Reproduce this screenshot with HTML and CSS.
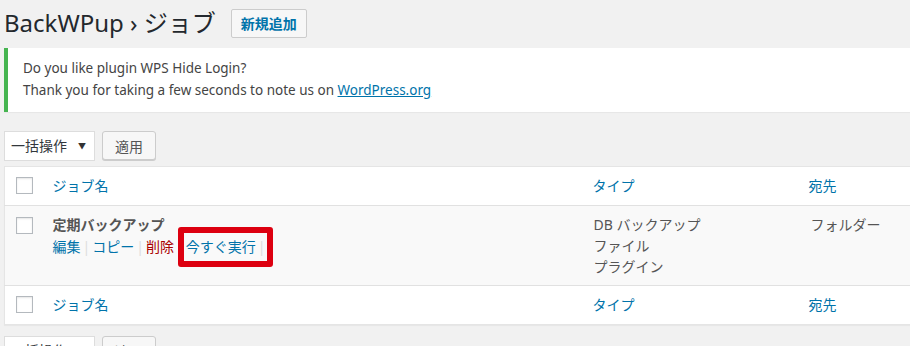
FILE: index.html
```html
<!DOCTYPE html>
<html lang="ja">
<head>
    <meta charset="UTF-8">
    <meta name="viewport" content="width=device-width, initial-scale=1.0">
    <title>BackWPup ジョブ</title>
    <link rel="stylesheet" href="styles.css">
</head>
<body>
    <div class="wrap">
        <div class="title-row">
            <h1>BackWPup › ジョブ</h1>
            <a href="#" class="title-action">新規追加</a>
        </div>

        <div class="notice">
            <p>Do you like plugin WPS Hide Login?</p>
            <p>Thank you for taking a few seconds to note us on <a href="#">WordPress.org</a></p>
        </div>

        <div class="tablenav">
            <div class="bulk-select">一括操作 <span class="arrow">▼</span></div>
            <button class="button">適用</button>
        </div>

        <table class="jobs">
            <thead>
                <tr>
                    <td class="check"><input type="checkbox"></td>
                    <th class="col-name"><a href="#">ジョブ名</a></th>
                    <th class="col-type"><a href="#">タイプ</a></th>
                    <th class="col-dest"><a href="#">宛先</a></th>
                </tr>
            </thead>
            <tbody>
                <tr>
                    <td class="check"><input type="checkbox"></td>
                    <td class="col-name">
                        <strong class="job-title">定期バックアップ</strong>
                        <div class="row-actions">
                            <a href="#">編集</a><span class="sep">|</span><a href="#">コピー</a><span class="sep">|</span><a href="#" class="delete">削除</a><span class="sep">|</span><span class="highlight"><a href="#">今すぐ実行</a><span class="sep">|</span><span class="mark"></span></span>
                        </div>
                    </td>
                    <td class="col-type">DB バックアップ<br>ファイル<br>プラグイン</td>
                    <td class="col-dest">フォルダー</td>
                </tr>
            </tbody>
            <tfoot>
                <tr>
                    <td class="check"><input type="checkbox"></td>
                    <th class="col-name"><a href="#">ジョブ名</a></th>
                    <th class="col-type"><a href="#">タイプ</a></th>
                    <th class="col-dest"><a href="#">宛先</a></th>
                </tr>
            </tfoot>
        </table>

        <div class="tablenav tablenav-bottom">
            <div class="bulk-select">一括操作 <span class="arrow">▼</span></div>
            <button class="button">適用</button>
        </div>
    </div>
</body>
</html>
```

FILE: styles.css
```css
html, body { margin: 0; padding: 0; background: #f1f1f1; overflow: hidden; }
body { font-family: "Noto Sans", "Noto Sans CJK JP", sans-serif; color: #444; font-size: 14px; }
a { color: #0073aa; text-decoration: none; }

.wrap { width: 940px; padding-left: 4px; }

.title-row { display: flex; align-items: center; height: 46px; }
h1 { margin: 0; font-size: 24px; font-weight: 400; color: #23282d; line-height: 29px; padding-bottom: 2px; }
.title-action { margin-left: 15px; padding: 0 9px; height: 27px; line-height: 27px; border: 1px solid #ccc; border-radius: 2px; background: #f7f7f7; font-size: 14px; font-weight: 700; color: #0073aa; }

.notice { margin-top: 2px; background: #fff; border-left: 4px solid #46b450; box-shadow: 0 1px 1px rgba(0, 0, 0, 0.04); padding: 9px 15px 11px; }
.notice p { margin: 0; line-height: 22px; font-size: 13.5px; }
.notice a { text-decoration: underline; }

.tablenav { display: flex; gap: 7px; margin-top: 19px; height: 30px; }
.tablenav-bottom { margin-top: 11px; }
.bulk-select { width: 83px; height: 28px; line-height: 28px; padding-left: 6px; background: #fff; border: 1px solid #ddd; color: #32373c; font-size: 14px; display: flex; justify-content: space-between; }
.bulk-select .arrow { font-size: 8px; color: #333; padding-right: 8px; }
.button { height: 29px; padding: 0 12px; font-family: inherit; font-size: 14px; color: #555; background: #f7f7f7; border: 1px solid #ccc; border-radius: 3px; box-shadow: 0 1px 0 #ccc; }

.jobs { width: 930px; margin-top: 5px; border-collapse: collapse; background: #fff; border: 1px solid #e5e5e5; box-shadow: 0 1px 1px rgba(0, 0, 0, 0.04); }
.jobs th, .jobs td { text-align: left; vertical-align: top; font-weight: 400; }
.jobs thead th, .jobs tfoot th { padding: 9px 10px 10px; line-height: 19px; font-size: 14px; }
.jobs thead tr { border-bottom: 1px solid #e1e1e1; }
.jobs tfoot tr { border-top: 1px solid #e1e1e1; }
.jobs .check { width: 38px; padding: 10px 0 0 11px; box-sizing: border-box; }
.jobs tbody .check { padding-top: 11px; }
.jobs .col-name { width: 520px; }
.jobs .col-type { width: 195px; }
.jobs tbody tr { background: #f9f9f9; }
.jobs tbody td { padding: 8px 10px; line-height: 21px; color: #555; }
.jobs tbody .col-type { padding-left: 11px; }
.jobs tbody .col-dest { padding-left: 12px; }

.check input { appearance: none; -webkit-appearance: none; margin: 0; width: 17px; height: 17px; border: 1px solid #b4b9be; background: #fff; box-shadow: inset 0 1px 2px rgba(0, 0, 0, 0.1); display: block; }

.job-title { display: block; font-size: 14px; color: #555; }
.row-actions { font-size: 14px; line-height: 23px; }
.row-actions .sep { color: #ddd; padding: 0 2px; }
.row-actions .delete { color: #a00; }
.highlight { position: relative; }
.mark { position: absolute; left: -8px; right: -6px; top: -10px; bottom: -11px; border: 6px solid #dd0010; border-radius: 3px; }
```
